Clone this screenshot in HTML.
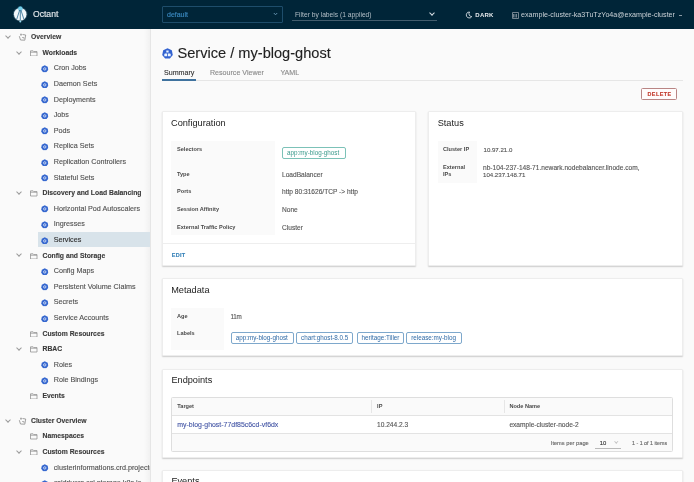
<!DOCTYPE html>
<html><head><meta charset="utf-8">
<style>
*{box-sizing:border-box;margin:0;padding:0}
body{-webkit-font-smoothing:antialiased}
.it,.v,.t{-webkit-text-stroke:0.12px currentColor}
#side,#hdr,#main{will-change:transform}
html,body{width:694px;height:482px;overflow:hidden;background:#fafafa;font-family:"Liberation Sans",sans-serif;color:#515151}
.abs{position:absolute}
.t{white-space:nowrap;line-height:1}
#hdr{position:absolute;left:0;top:0;width:694px;height:29px;background:#002538}
#side{position:absolute;left:0;top:29px;width:151px;height:453px;background:#fafafa;border-right:1px solid #e6e6e6;overflow:hidden}
.it{position:absolute;white-space:nowrap;font-size:7.2px;line-height:9px}
.b{font-weight:bold;color:#3a3a3a;font-size:6.8px}
.chev{position:absolute;width:4px;height:4px;border-right:1px solid #9a9a9a;border-bottom:1px solid #9a9a9a;transform:rotate(45deg)}
.fold{position:absolute;width:6px;height:5px;border:1px solid #8c8c8c;border-top-width:1.5px}
.ic{position:absolute;width:7px;height:7px;border-radius:50%;background:#3a6cd8}
.ic:after{content:"";position:absolute;left:2px;top:2px;width:3px;height:3px;border-radius:50%;background:#fff}
.card{position:absolute;background:#fff;border:1px solid #ededed;box-shadow:0 1px 1.5px 0 #cdcdcd;border-radius:1px}
.ctitle{position:absolute;font-size:9.2px;color:#222;white-space:nowrap;line-height:11px}
.kcol{position:absolute;background:#fafafa}
.k{position:absolute;font-size:5.6px;font-weight:bold;color:#4a4a4a;white-space:nowrap;line-height:7px}
.v{position:absolute;font-size:6.6px;color:#565656;white-space:nowrap;line-height:8px}
.lbl{position:absolute;height:12px;border:1px solid #7ea8cc;border-radius:2px;color:#2f6aa6;font-size:6.3px;line-height:10px;padding:0 4px;white-space:nowrap;background:#fff}
</style></head><body>
<svg width="0" height="0" style="position:absolute"><defs>
<symbol id="k8s" viewBox="0 0 10 10"><path d="M5 0.3 L8.9 2.2 L9.8 6.4 L7.1 9.7 L2.9 9.7 L0.2 6.4 L1.1 2.2 Z" fill="#3567cf"/><circle cx="5" cy="5.2" r="1.6" fill="none" stroke="#fff" stroke-width="0.9"/></symbol>
</defs></svg>

<div id="hdr">
  <svg class="abs" style="left:10px;top:3px" width="22" height="22" viewBox="0 0 22 22">
    <ellipse cx="10.2" cy="11.3" rx="7.3" ry="7.1" fill="#8fb8cc" opacity="0.25"/><ellipse cx="10.2" cy="11.3" rx="6.3" ry="6.3" fill="#f2f7fa"/>
    <circle cx="10.3" cy="5.6" r="2.7" fill="#4fb3d6" opacity="0.45"/>
    <circle cx="10.3" cy="5.6" r="2" fill="#74cfea"/>
    <path d="M9.7 7 L6.8 16 M10.3 7.2 L10.3 17 M10.9 7 L13.8 16" stroke="#2a6a8f" stroke-width="0.8" fill="none"/>
    <circle cx="10.3" cy="18.4" r="1" fill="#9adcf0"/>
  </svg>
  <div class="abs" style="left:33px;top:9.4px;font-size:8.6px;color:#e3e8eb;line-height:10px;-webkit-text-stroke:0.15px #e3e8eb">Octant</div>
  <div class="abs" style="left:162px;top:6px;width:121px;height:17px;border:1px solid #1e4d6b;border-radius:1px"></div>
  <div class="abs" style="left:167px;top:10px;font-size:7px;color:#3b8bc2;line-height:9px;-webkit-text-stroke:0.12px #3b8bc2">default</div>
  <svg class="abs" style="left:272.5px;top:11.5px" width="5" height="4" viewBox="0 0 5 4"><path d="M0.8 1 L2.5 2.8 L4.2 1" stroke="#6d9dba" stroke-width="0.9" fill="none"/></svg>
  <div class="abs" style="left:295px;top:9.8px;font-size:6.7px;color:#b3bfc7;line-height:9px">Filter by labels (1 applied)</div>
  <div class="abs" style="left:291.5px;top:19.5px;width:145px;height:1px;background:#435d6d"></div>
  <div class="abs" style="left:430px;top:11px;width:4px;height:4px;border-right:1px solid #d8e0e5;border-bottom:1px solid #d8e0e5;transform:rotate(45deg)"></div>
  <svg class="abs" style="left:465px;top:10.5px" width="8" height="8" viewBox="0 0 8 8"><path d="M4.6 1 A3 3 0 1 0 6.8 5.6 A2.8 2.8 0 0 1 4.6 1 Z" fill="none" stroke="#d5dde2" stroke-width="0.9"/></svg>
  <div class="abs" style="left:475.3px;top:10.6px;font-size:6px;font-weight:bold;letter-spacing:0.25px;color:#e8ecef;line-height:9px">DARK</div>
  <svg class="abs" style="left:512px;top:11.5px" width="7" height="7" viewBox="0 0 7 7"><path d="M0.5 0.5 h6 v6 h-6 z M1.5 2 v3.5 M3 2 v3.5 M4.5 2 v3.5" stroke="#8e9ca6" stroke-width="0.8" fill="none"/></svg>
  <div class="abs" style="left:521px;top:11px;font-size:7.15px;color:#c9d1d6;line-height:9px">example-cluster-ka3TuTzYo4a@example-cluster</div>
  <div class="abs" style="left:678.5px;top:14.5px;width:3px;height:1px;background:#8a9aa5"></div>
</div>

<div id="side">
<div class="abs" style="left:144px;top:0;width:6px;height:453px;background:linear-gradient(to right,rgba(0,0,0,0),rgba(0,0,0,0.035))"></div>
<div class="chev" style="left:5.8px;top:4.9px"></div>
<svg class="abs" style="left:18px;top:4.2px" width="9" height="8" viewBox="0 0 9 8"><path d="M2.2 0.8 l1.6 0 l0 1.8 l-1.6 0 z" fill="#9a9a9a"/><path d="M1.3 3.2 L2.5 7 L6.8 7.2 L7.7 2 L4.5 1.5" stroke="#8a8a8a" stroke-width="0.8" fill="none" stroke-linejoin="round"/><path d="M4 4.5 h2 v1.5" stroke="#9a9a9a" stroke-width="0.7" fill="none"/></svg>
<div class="it b" style="left:31px;top:3.2px">Overview</div>
<div class="chev" style="left:16.8px;top:20.5px"></div>
<svg class="abs" style="left:30px;top:20.7px" width="7.5" height="6.5" viewBox="0 0 7.5 6.5"><path d="M0.5 0.8 h2.6 l0.7 0.8 h3.2 v4.4 h-6.5 z M0.5 2.2 h6.5" stroke="#8e8e8e" stroke-width="0.75" fill="none"/></svg>
<div class="it b" style="left:42.5px;top:18.8px">Workloads</div>
<svg class="abs" style="left:41px;top:36.0px" width="7.5" height="7.5" viewBox="0 0 10 10"><use href="#k8s"/></svg>
<div class="it" style="left:53.7px;top:34.4px">Cron Jobs</div>
<svg class="abs" style="left:41px;top:51.6px" width="7.5" height="7.5" viewBox="0 0 10 10"><use href="#k8s"/></svg>
<div class="it" style="left:53.7px;top:50.0px">Daemon Sets</div>
<svg class="abs" style="left:41px;top:67.2px" width="7.5" height="7.5" viewBox="0 0 10 10"><use href="#k8s"/></svg>
<div class="it" style="left:53.7px;top:65.6px">Deployments</div>
<svg class="abs" style="left:41px;top:82.8px" width="7.5" height="7.5" viewBox="0 0 10 10"><use href="#k8s"/></svg>
<div class="it" style="left:53.7px;top:81.2px">Jobs</div>
<svg class="abs" style="left:41px;top:98.4px" width="7.5" height="7.5" viewBox="0 0 10 10"><use href="#k8s"/></svg>
<div class="it" style="left:53.7px;top:96.8px">Pods</div>
<svg class="abs" style="left:41px;top:114.0px" width="7.5" height="7.5" viewBox="0 0 10 10"><use href="#k8s"/></svg>
<div class="it" style="left:53.7px;top:112.4px">Replica Sets</div>
<svg class="abs" style="left:41px;top:129.6px" width="7.5" height="7.5" viewBox="0 0 10 10"><use href="#k8s"/></svg>
<div class="it" style="left:53.7px;top:128.0px">Replication Controllers</div>
<svg class="abs" style="left:41px;top:145.2px" width="7.5" height="7.5" viewBox="0 0 10 10"><use href="#k8s"/></svg>
<div class="it" style="left:53.7px;top:143.6px">Stateful Sets</div>
<div class="chev" style="left:16.8px;top:160.9px"></div>
<svg class="abs" style="left:30px;top:161.1px" width="7.5" height="6.5" viewBox="0 0 7.5 6.5"><path d="M0.5 0.8 h2.6 l0.7 0.8 h3.2 v4.4 h-6.5 z M0.5 2.2 h6.5" stroke="#8e8e8e" stroke-width="0.75" fill="none"/></svg>
<div class="it b" style="left:42.5px;top:159.2px">Discovery and Load Balancing</div>
<svg class="abs" style="left:41px;top:176.4px" width="7.5" height="7.5" viewBox="0 0 10 10"><use href="#k8s"/></svg>
<div class="it" style="left:53.7px;top:174.8px">Horizontal Pod Autoscalers</div>
<svg class="abs" style="left:41px;top:192.0px" width="7.5" height="7.5" viewBox="0 0 10 10"><use href="#k8s"/></svg>
<div class="it" style="left:53.7px;top:190.4px">Ingresses</div>
<div class="abs" style="left:38px;top:203px;width:113px;height:15px;background:#d8e3ea"></div>
<svg class="abs" style="left:41px;top:207.6px" width="7.5" height="7.5" viewBox="0 0 10 10"><use href="#k8s"/></svg>
<div class="it" style="left:53.7px;top:206.0px;color:#2e2e2e">Services</div>
<div class="chev" style="left:16.8px;top:223.3px"></div>
<svg class="abs" style="left:30px;top:223.5px" width="7.5" height="6.5" viewBox="0 0 7.5 6.5"><path d="M0.5 0.8 h2.6 l0.7 0.8 h3.2 v4.4 h-6.5 z M0.5 2.2 h6.5" stroke="#8e8e8e" stroke-width="0.75" fill="none"/></svg>
<div class="it b" style="left:42.5px;top:221.6px">Config and Storage</div>
<svg class="abs" style="left:41px;top:238.8px" width="7.5" height="7.5" viewBox="0 0 10 10"><use href="#k8s"/></svg>
<div class="it" style="left:53.7px;top:237.2px">Config Maps</div>
<svg class="abs" style="left:41px;top:254.4px" width="7.5" height="7.5" viewBox="0 0 10 10"><use href="#k8s"/></svg>
<div class="it" style="left:53.7px;top:252.8px">Persistent Volume Claims</div>
<svg class="abs" style="left:41px;top:270.0px" width="7.5" height="7.5" viewBox="0 0 10 10"><use href="#k8s"/></svg>
<div class="it" style="left:53.7px;top:268.4px">Secrets</div>
<svg class="abs" style="left:41px;top:285.6px" width="7.5" height="7.5" viewBox="0 0 10 10"><use href="#k8s"/></svg>
<div class="it" style="left:53.7px;top:284.0px">Service Accounts</div>
<svg class="abs" style="left:30px;top:301.5px" width="7.5" height="6.5" viewBox="0 0 7.5 6.5"><path d="M0.5 0.8 h2.6 l0.7 0.8 h3.2 v4.4 h-6.5 z M0.5 2.2 h6.5" stroke="#8e8e8e" stroke-width="0.75" fill="none"/></svg>
<div class="it b" style="left:42.5px;top:299.6px">Custom Resources</div>
<div class="chev" style="left:16.8px;top:316.9px"></div>
<svg class="abs" style="left:30px;top:317.1px" width="7.5" height="6.5" viewBox="0 0 7.5 6.5"><path d="M0.5 0.8 h2.6 l0.7 0.8 h3.2 v4.4 h-6.5 z M0.5 2.2 h6.5" stroke="#8e8e8e" stroke-width="0.75" fill="none"/></svg>
<div class="it b" style="left:42.5px;top:315.2px">RBAC</div>
<svg class="abs" style="left:41px;top:332.4px" width="7.5" height="7.5" viewBox="0 0 10 10"><use href="#k8s"/></svg>
<div class="it" style="left:53.7px;top:330.8px">Roles</div>
<svg class="abs" style="left:41px;top:348.0px" width="7.5" height="7.5" viewBox="0 0 10 10"><use href="#k8s"/></svg>
<div class="it" style="left:53.7px;top:346.4px">Role Bindings</div>
<svg class="abs" style="left:30px;top:363.9px" width="7.5" height="6.5" viewBox="0 0 7.5 6.5"><path d="M0.5 0.8 h2.6 l0.7 0.8 h3.2 v4.4 h-6.5 z M0.5 2.2 h6.5" stroke="#8e8e8e" stroke-width="0.75" fill="none"/></svg>
<div class="it b" style="left:42.5px;top:362.0px">Events</div>
<div class="chev" style="left:5.8px;top:388.5px"></div>
<svg class="abs" style="left:18px;top:387.8px" width="9" height="8" viewBox="0 0 9 8"><path d="M2.2 0.8 l1.6 0 l0 1.8 l-1.6 0 z" fill="#9a9a9a"/><path d="M1.3 3.2 L2.5 7 L6.8 7.2 L7.7 2 L4.5 1.5" stroke="#8a8a8a" stroke-width="0.8" fill="none" stroke-linejoin="round"/><path d="M4 4.5 h2 v1.5" stroke="#9a9a9a" stroke-width="0.7" fill="none"/></svg>
<div class="it b" style="left:31px;top:386.8px">Cluster Overview</div>
<svg class="abs" style="left:30px;top:404.3px" width="7.5" height="6.5" viewBox="0 0 7.5 6.5"><path d="M0.5 0.8 h2.6 l0.7 0.8 h3.2 v4.4 h-6.5 z M0.5 2.2 h6.5" stroke="#8e8e8e" stroke-width="0.75" fill="none"/></svg>
<div class="it b" style="left:42.5px;top:402.4px">Namespaces</div>
<div class="chev" style="left:16.8px;top:419.7px"></div>
<svg class="abs" style="left:30px;top:419.9px" width="7.5" height="6.5" viewBox="0 0 7.5 6.5"><path d="M0.5 0.8 h2.6 l0.7 0.8 h3.2 v4.4 h-6.5 z M0.5 2.2 h6.5" stroke="#8e8e8e" stroke-width="0.75" fill="none"/></svg>
<div class="it b" style="left:42.5px;top:418.0px">Custom Resources</div>
<svg class="abs" style="left:41px;top:435.2px" width="7.5" height="7.5" viewBox="0 0 10 10"><use href="#k8s"/></svg>
<div class="it" style="left:53.7px;top:433.6px">clusterinformations.crd.projectcalico.org</div>
<svg class="abs" style="left:41px;top:450.8px" width="7.5" height="7.5" viewBox="0 0 10 10"><use href="#k8s"/></svg>
<div class="it" style="left:53.7px;top:449.2px">csidrivers.csi.storage.k8s.io</div>
</div><!--side-->

<div id="main">
  <!-- title -->
  <svg class="abs" style="left:162.2px;top:47.5px" width="11" height="11" viewBox="0 0 11 11">
    <path d="M5.5 0.2 L9.8 2.3 L10.8 6.9 L7.9 10.5 L3.1 10.5 L0.2 6.9 L1.2 2.3 Z" fill="#3262d0"/>
    <path d="M4.3 2.5 h2.3 v2.1 h-2.3 z M2.3 6 L3 5.4 h2.1 v2.8 h-2.8 z M5.9 5.4 h2.1 L8.7 6 v2.2 h-2.8 z" fill="#eaf4ff"/>
  </svg>
  <div class="abs t" style="left:177.5px;top:45.5px;font-size:14.6px;color:#222">Service / my-blog-ghost</div>
  <!-- tabs -->
  <div class="abs t" style="left:164px;top:70.3px;font-size:7.1px;color:#333">Summary</div>
  <div class="abs t" style="left:210px;top:70.3px;font-size:7.1px;color:#8a8a8a">Resource Viewer</div>
  <div class="abs t" style="left:280.4px;top:70.3px;font-size:7.1px;color:#8a8a8a">YAML</div>
  <div class="abs" style="left:162px;top:80px;width:521px;height:1px;background:#e6e6e6"></div>
  <div class="abs" style="left:162px;top:79px;width:34px;height:2px;background:#3f729e"></div>
  <!-- delete -->
  <div class="abs" style="left:641px;top:88px;width:36px;height:11.5px;border:1px solid #b98584;border-radius:1.5px;background:#fffcfc"></div>
  <div class="abs t" style="left:647.5px;top:91.7px;font-size:5.4px;font-weight:bold;letter-spacing:0.45px;color:#c2382a">DELETE</div>

  <!-- configuration -->
  <div class="card" style="left:162px;top:111px;width:254px;height:155px"></div>
  <div class="ctitle" style="left:171px;top:117.5px">Configuration</div>
  <div class="kcol" style="left:171px;top:141px;width:103.5px;height:94px"></div>
  <div class="k" style="left:177px;top:145.5px">Selectors</div>
  <div class="k" style="left:177px;top:170.5px">Type</div>
  <div class="k" style="left:177px;top:188.2px">Ports</div>
  <div class="k" style="left:177px;top:206px">Session Affinity</div>
  <div class="k" style="left:177px;top:223.7px">External Traffic Policy</div>
  <div class="lbl" style="left:282px;top:146.5px;width:64px;border-color:#7cc2b8;color:#3a9a8c">app:my-blog-ghost</div>
  <div class="v" style="left:282px;top:170.6px">LoadBalancer</div>
  <div class="v" style="left:282px;top:188.4px">http 80:31626/TCP -&gt; http</div>
  <div class="v" style="left:282px;top:205.9px">None</div>
  <div class="v" style="left:282px;top:223.8px">Cluster</div>
  <div class="abs" style="left:163px;top:243px;width:252px;height:1px;background:#eeeeee"></div>
  <div class="abs t" style="left:171.7px;top:252.7px;font-size:5.5px;font-weight:bold;letter-spacing:0.3px;color:#3480b8">EDIT</div>

  <!-- status -->
  <div class="card" style="left:428px;top:111px;width:255px;height:155px"></div>
  <div class="ctitle" style="left:437.7px;top:117.5px">Status</div>
  <div class="kcol" style="left:437.7px;top:140.5px;width:39.5px;height:42.5px"></div>
  <div class="k" style="left:443px;top:145.6px">Cluster IP</div>
  <div class="k" style="left:443px;top:164px">External</div>
  <div class="k" style="left:443px;top:171.3px">IPs</div>
  <div class="v" style="left:483.5px;top:145.9px;font-size:6.1px">10.97.21.0</div>
  <div class="v" style="left:483px;top:163.6px">nb-104-237-148-71.newark.nodebalancer.linode.com,</div>
  <div class="v" style="left:483px;top:171.2px;font-size:6.1px">104.237.148.71</div>

  <!-- metadata -->
  <div class="card" style="left:162px;top:278px;width:521px;height:78px"></div>
  <div class="ctitle" style="left:171.2px;top:285.1px">Metadata</div>
  <div class="kcol" style="left:171.2px;top:308px;width:53px;height:41.7px"></div>
  <div class="k" style="left:177px;top:313.1px">Age</div>
  <div class="k" style="left:177px;top:330.4px">Labels</div>
  <div class="v" style="left:230.6px;top:312.8px;font-size:6.3px;letter-spacing:-0.3px">11m</div>
  <div class="lbl" style="left:230.7px;top:331.5px;width:63px">app:my-blog-ghost</div>
  <div class="lbl" style="left:296px;top:331.5px;width:57px">chart:ghost-8.0.5</div>
  <div class="lbl" style="left:356.5px;top:331.5px;width:47.5px">heritage:Tiller</div>
  <div class="lbl" style="left:406.2px;top:331.5px;width:55.5px">release:my-blog</div>

  <!-- endpoints -->
  <div class="card" style="left:162px;top:369px;width:521px;height:89px"></div>
  <div class="ctitle" style="left:171.4px;top:375.2px">Endpoints</div>
  <div class="abs" style="left:171.4px;top:397.4px;width:502px;height:54.5px;border:1px solid #dedede;border-radius:1.5px;background:#fafafa"></div>
  <div class="abs" style="left:172.4px;top:415px;width:500px;height:18.5px;background:#fff;border-top:1px solid #e3e3e3;border-bottom:1px solid #e3e3e3"></div>
  <div class="abs" style="left:371px;top:400px;width:1px;height:13px;background:#e6e6e6"></div>
  <div class="abs" style="left:504px;top:400px;width:1px;height:13px;background:#e6e6e6"></div>
  <div class="k" style="left:177.3px;top:403.3px">Target</div>
  <div class="k" style="left:377.1px;top:403.3px">IP</div>
  <div class="k" style="left:509.4px;top:403.3px">Node Name</div>
  <div class="v" style="left:177.3px;top:420.5px;font-size:6.95px;color:#4557a6">my-blog-ghost-77df85c6cd-vf6dx</div>
  <div class="v" style="left:377px;top:420.5px">10.244.2.3</div>
  <div class="v" style="left:509.4px;top:420.5px">example-cluster-node-2</div>
  <div class="v" style="left:550.8px;top:438.7px;font-size:5.7px;color:#666">Items per page</div>
  <div class="v" style="left:599.7px;top:439.2px;font-size:5.9px;color:#333">10</div>
  <div class="abs" style="left:595px;top:448px;width:26px;height:1px;background:#b9b9b9"></div>
  <div class="abs" style="left:615px;top:440.3px;width:2.5px;height:2.5px;border-right:1px solid #c4c4c4;border-bottom:1px solid #c4c4c4;transform:rotate(45deg)"></div>
  <div class="v" style="left:632px;top:438.7px;font-size:5.3px;color:#666">1 - 1 of 1 items</div>

  <!-- events -->
  <div class="card" style="left:162px;top:469.5px;width:521px;height:60px"></div>
  <div class="ctitle" style="left:171.4px;top:475.5px">Events</div>
</div>

</body></html>
